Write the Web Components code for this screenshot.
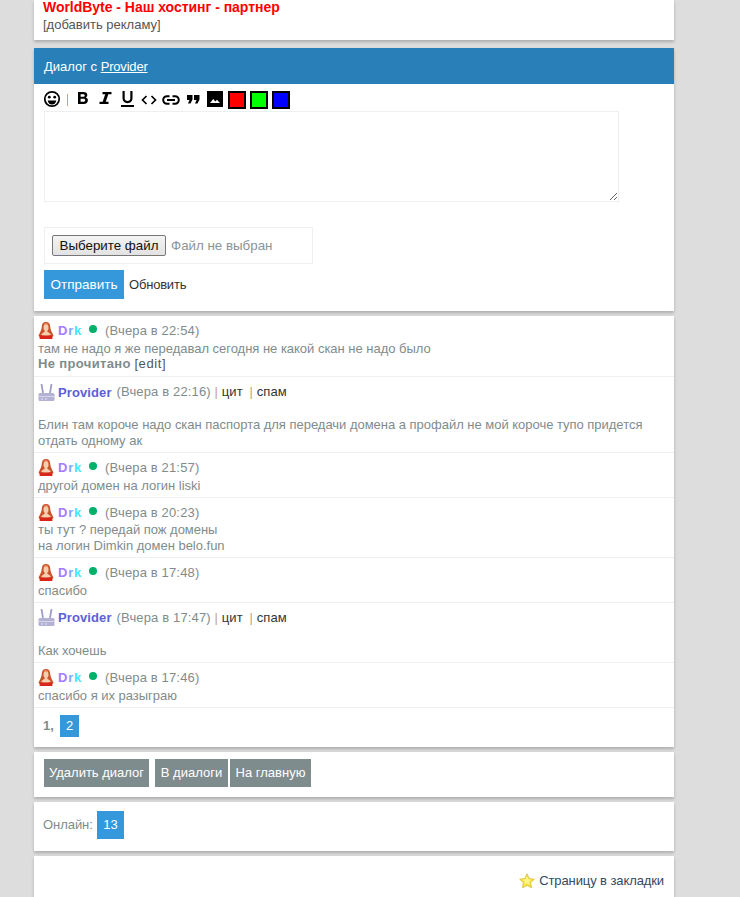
<!DOCTYPE html>
<html lang="ru"><head><meta charset="utf-8"><title>Диалог</title>
<style>
html,body{margin:0;padding:0;height:897px;overflow:hidden;background:#ddd}
body{font:13px/15px "Liberation Sans",Arial,sans-serif;color:#7f8c8d}
b.s{color:#c8a27c;font-weight:normal;letter-spacing:0}
.m{letter-spacing:.15px}
.c{color:#333;letter-spacing:.1px}
</style></head><body>
<template id="t-page"><style>
:host{display:flex;flex-direction:column;gap:5px;width:640px;margin-left:34px}
</style><slot></slot></template>

<template id="t-box"><style>
:host{display:block;background:#fff;box-shadow:0 2px 3px rgba(0,0,0,.22)}
</style><slot></slot></template>

<template id="t-tb"><style>
:host{display:flex;align-items:center;height:19px}
svg{display:block;flex:none}
.sw{box-sizing:border-box;width:18px;height:18px;border:2px solid #000;margin-right:4px}
.sep{width:1px;height:12px;background:#c8a27c;margin:0 9px 0 6px}
.pic{width:16px;height:16px;background:#000;margin:-1px 5px 0 0}
</style>
<svg width="17" height="18" viewBox="1 0 17 18" style="margin-top:-1px"><circle cx="9" cy="9" r="7.200" fill="none" stroke="#000" stroke-width="1.700"/><circle cx="6.300" cy="7.200" r="1.400"/><circle cx="11.700" cy="7.200" r="1.400"/><path d="M4.800 10.400h8.400a4.200 4.200 0 0 1-8.400 0z"/></svg>
<span class="sep"></span>
<svg width="12" height="14" viewBox="0 0 12 14" style="margin:-3px 10px 0 0"><path fill-rule="evenodd" d="M1 1h5.600c2.300 0 3.700 1.100 3.700 3 0 1.200-.6 2-1.500 2.500 1.300.4 2.100 1.400 2.100 2.800 0 2.300-1.600 3.700-4.100 3.700H1zM3.600 3.200v2.500h2.600c.9 0 1.500-.5 1.500-1.300s-.6-1.200-1.500-1.200zM3.600 7.800v3h3c1 0 1.600-.6 1.600-1.500S7.600 7.800 6.600 7.800z"/></svg>
<svg width="13" height="14" viewBox="0 0 13 14" style="margin:-3px 9px 0 0"><path d="M3.500 1H12.500V3.200H9.300L6.800 10.800H9.500V13H.5V10.800H3.700L6.200 3.200H3.500z"/></svg>
<svg width="13" height="16" viewBox="0 0 13 16" style="margin:-2px 7px 0 0"><path d="M1.500 0H3.700V7.200C3.700 9 4.800 10 6.500 10S9.300 9 9.300 7.200V0H11.500V7.300C11.500 10.300 9.500 12.200 6.500 12.200S1.500 10.300 1.500 7.300z"/><path d="M0 14h13v2H0z"/></svg>
<svg width="16" height="10" viewBox="0 0 16 10" style="margin-right:5px"><path d="M5.500 1 1.500 5l4 4M10.500 1l4 4-4 4" fill="none" stroke="#000" stroke-width="1.700"/></svg>
<svg width="18" height="10" viewBox="0 0 18 10" style="margin-right:7px"><path d="M7.500 1.200H5a3.800 3.800 0 0 0 0 7.600h2.500M10.500 1.200H13a3.800 3.800 0 0 1 0 7.600h-2.500M5 5h8" fill="none" stroke="#000" stroke-width="2"/></svg>
<svg width="14" height="9" viewBox="0 0 14 9" style="margin-right:6px"><path d="M0 0h5.500v4.500L3.500 8.500H1L2.500 5H0zM7 0h5.500v4.500L10.500 8.500H8L9.500 5H7z"/></svg>
<span class="pic"><svg width="16" height="16" viewBox="0 0 16 16"><path fill="#fff" d="M3 12l3.200-4 2.200 2.400 1.500-1.600L13 12z"/></svg></span>
<span class="sw" style="background:#f00"></span><span class="sw" style="background:#0f0"></span><span class="sw" style="background:#00f;margin-right:0"></span>
</template>

<template id="t-msg"><style>
:host{display:block;padding:7px 4px 3.790px;border-top:1px solid #ecf0f1;line-height:15.500px;color:#7f8c8d;font-size:13px;letter-spacing:-.02px}
:host(:first-child){border-top-color:transparent;padding-top:6px;padding-bottom:4.790px}
.h{display:flex;align-items:center;height:15.500px;margin-bottom:2px}
.a{display:block;width:16px;height:17px;margin-right:4px;flex:none}
.body{display:block}
</style><div class="h"><span class="a"><slot name="av"></slot></span><slot name="nick"></slot><slot name="meta"></slot></div><div class="body"><slot></slot></div></template>

<template id="t-drk"><style>
:host{display:inline-flex;align-items:center;font:bold 13px "Liberation Sans",Arial,sans-serif}
i{font-style:normal;letter-spacing:.8px}
.dot{width:8px;height:8px;border-radius:50%;background:#00b16a;margin:0 8px 4px 7px}
</style><i style="color:#a67cff">D</i><i style="color:#7fa8ff">r</i><i style="color:#3ee8ff">k</i><span class="dot"></span></template>

<template id="t-prov"><style>
:host{display:inline-block;font:bold 13px "Liberation Sans",Arial,sans-serif;color:#5a62d8;margin-right:5px;letter-spacing:.1px}
</style>Provider</template>

<template id="t-avatar-girl"><style>:host{display:block}svg{display:block}</style><svg width="16" height="17" viewBox="0 0 16 17"><path fill="#c9532c" d="M8 0C5 0 4 2 3.800 4.500 3.600 7.500 2.500 10 .5 13.500L2 16h12l1.500-2.500C13.500 10 12.400 7.500 12.200 4.500 12 2 11 0 8 0z"/><path fill="#e8825a" d="M8 1C6.500 1 5.500 2 5.200 4L6 3c1 .5 3 .5 4 0l.8 1C10.500 2 9.500 1 8 1z"/><ellipse cx="8" cy="5.800" rx="2.500" ry="3.200" fill="#f6cfae"/><path fill="#f6cfae" d="M6.800 8h2.400v1.500L12.500 12v1.500h-9V12l3.300-2.500z"/><path fill="#d8261a" d="M1.500 17l1-4c1.500.6 3 .8 5.500.8s4-.2 5.500-.8l1 4z"/></svg></template>
<template id="t-avatar-router"><style>:host{display:block}svg{display:block}</style><svg width="17" height="17" viewBox="0 0 17 17"><path d="M3.500 0 5 9M13.500 0 12 9" stroke="#a09ec8" stroke-width="1.800" fill="none"/><rect x=".5" y="9" width="16" height="8" rx="1.500" fill="#b3b1d4"/><path d="M.5 12.500h16" stroke="#d9d8ea"/><path d="M3 15h2M7 15h2" stroke="#e8e8f4"/></svg></template>
<template id="t-star"><style>:host{display:block;width:16px;height:16px;flex:none}svg{display:block}</style><svg width="16" height="16" viewBox="0 0 16 16"><path d="M8 .8l2.200 4.700 5.100.7-3.700 3.500.9 5.100L8 12.400l-4.500 2.400.9-5.100L.7 6.200l5.100-.7z" fill="#f9e43c" stroke="#cdb52c" stroke-width=".7"/><path d="M8 3.200l1.300 3 3 .4-2.200 2.100.5 3L8 10.200l-2.600 1.500.5-3-2.200-2.100 3-.4z" fill="#fdf48c"/></svg></template>

<template id="t-btn"><style>
:host{display:inline-flex;align-items:center;justify-content:center;box-sizing:border-box;height:var(--h,28px);background:var(--bg,#7f8c8d);color:#fff;padding:0 var(--p,5px);font-size:var(--fs,13px);white-space:nowrap;letter-spacing:0}
</style><slot></slot></template>

<x-page>
<x-box style="height:40px;padding:0 9px;box-sizing:border-box;margin-bottom:3px">
  <div style="height:17px;line-height:15px;color:#f00;font-weight:bold;font-size:14px;white-space:pre;letter-spacing:-.03px">WorldByte - Наш хостинг - партнер</div>
  <div style="color:#555;line-height:15px">[добавить рекламу]</div>
</x-box>
<x-box style="height:263px">
  <div style="height:36px;background:#2980b9;color:#fff;line-height:37px;padding-left:10px;box-sizing:border-box">Диалог с <span style="text-decoration:underline;letter-spacing:-.2px">Provider</span></div>
  <div style="padding:6px 10px 0">
    <x-toolbar></x-toolbar>
    <div style="box-sizing:border-box;width:575px;height:91px;border:1px solid #ecf0f1;margin-top:2px;position:relative"><svg width="10" height="10" viewBox="0 0 10 10" style="position:absolute;right:0;bottom:0"><path d="M9 2 2 9M9 6 6 9" stroke="#666" stroke-width="1"/></svg></div>
    <div style="box-sizing:border-box;width:269px;height:37px;border:1px solid #ecf0f1;margin-top:25px;display:flex;align-items:center;padding:0 7px;font-size:13.330px;color:#8a9496">
      <span style="box-sizing:border-box;height:21px;width:114px;border:1px solid #777;border-radius:2px;background:linear-gradient(#f4f4f4,#e2e2e2);color:#111;text-align:center;line-height:19px;margin-right:5px">Выберите файл</span>Файл не выбран
    </div>
    <div style="display:flex;align-items:center;margin-top:6px">
      <x-btn style="--bg:#3498db;--h:29px;width:80px;--p:0;--fs:13.500px">Отправить</x-btn>
      <span style="color:#333;margin-left:5px;letter-spacing:-.2px">Обновить</span>
    </div>
  </div>
</x-box>
<x-box>
  <x-msg><x-girl slot="av"></x-girl><x-drk slot="nick"></x-drk><span slot="meta" class="m">(Вчера в 22:54)</span>там не надо я же передавал сегодня не какой скан не надо было<br><b style="letter-spacing:.35px">Не прочитано</b> <span style="color:#555;letter-spacing:.6px">[edit]</span></x-msg>
  <x-msg><x-router slot="av"></x-router><x-prov slot="nick"></x-prov><span slot="meta" class="m">(Вчера в 22:16) <b class="s">|</b> <span class="c">цит</span> <b class="s" style="margin-left:3px">|</b> <span class="c">спам</span></span><br>Блин там короче надо скан паспорта для передачи домена а профайл не мой короче тупо придется отдать одному ак</x-msg>
  <x-msg><x-girl slot="av"></x-girl><x-drk slot="nick"></x-drk><span slot="meta" class="m">(Вчера в 21:57)</span>другой домен на логин liski</x-msg>
  <x-msg><x-girl slot="av"></x-girl><x-drk slot="nick"></x-drk><span slot="meta" class="m">(Вчера в 20:23)</span>ты тут ? передай пож домены<br>на логин Dimkin домен belo.fun</x-msg>
  <x-msg><x-girl slot="av"></x-girl><x-drk slot="nick"></x-drk><span slot="meta" class="m">(Вчера в 17:48)</span>спасибо</x-msg>
  <x-msg><x-router slot="av"></x-router><x-prov slot="nick"></x-prov><span slot="meta" class="m">(Вчера в 17:47) <b class="s">|</b> <span class="c">цит</span> <b class="s" style="margin-left:3px">|</b> <span class="c">спам</span></span><br>Как хочешь</x-msg>
  <x-msg><x-girl slot="av"></x-girl><x-drk slot="nick"></x-drk><span slot="meta" class="m">(Вчера в 17:46)</span>спасибо я их разыграю</x-msg>
  <div style="box-sizing:border-box;height:40px;border-top:1px solid #ecf0f1;padding:7px 0 0 9px;display:flex;align-items:flex-start;gap:6px">
    <b style="line-height:22px;letter-spacing:.1px;width:11px">1,</b><x-btn style="--bg:#3498db;--h:22px;--p:6px;width:19px">2</x-btn>
  </div>
</x-box>
<x-box style="height:45px;padding:7px 10px 0;box-sizing:border-box;display:flex;align-items:flex-start">
  <x-btn style="width:105px;margin-right:6px">Удалить диалог</x-btn><x-btn style="width:73px;margin-right:2px">В диалоги</x-btn><x-btn style="width:81px">На главную</x-btn>
</x-box>
<x-box style="height:49px;padding:9px 0 0 9px;box-sizing:border-box;display:flex;align-items:flex-start">
  <span style="line-height:28px;width:54px;letter-spacing:-.05px">Онлайн:</span><x-btn style="--bg:#3498db;width:27px;--p:0">13</x-btn>
</x-box>
<x-box style="height:60px;padding:17px 10px 0 0;box-sizing:border-box;display:flex;justify-content:flex-end;align-items:flex-start;gap:4px;color:#34495e">
  <x-star></x-star><span style="line-height:16px;letter-spacing:-.1px">Страницу в закладки</span>
</x-box>
</x-page>
<script>
function def(n,t){customElements.define(n,class extends HTMLElement{constructor(){super();this.attachShadow({mode:'open'}).appendChild(document.getElementById(t).content.cloneNode(true))}})}
[['x-page','t-page'],['x-box','t-box'],['x-toolbar','t-tb'],['x-msg','t-msg'],['x-drk','t-drk'],['x-prov','t-prov'],['x-girl','t-avatar-girl'],['x-router','t-avatar-router'],['x-star','t-star'],['x-btn','t-btn']].forEach(a=>def(a[0],a[1]));
</script>
</body></html>
